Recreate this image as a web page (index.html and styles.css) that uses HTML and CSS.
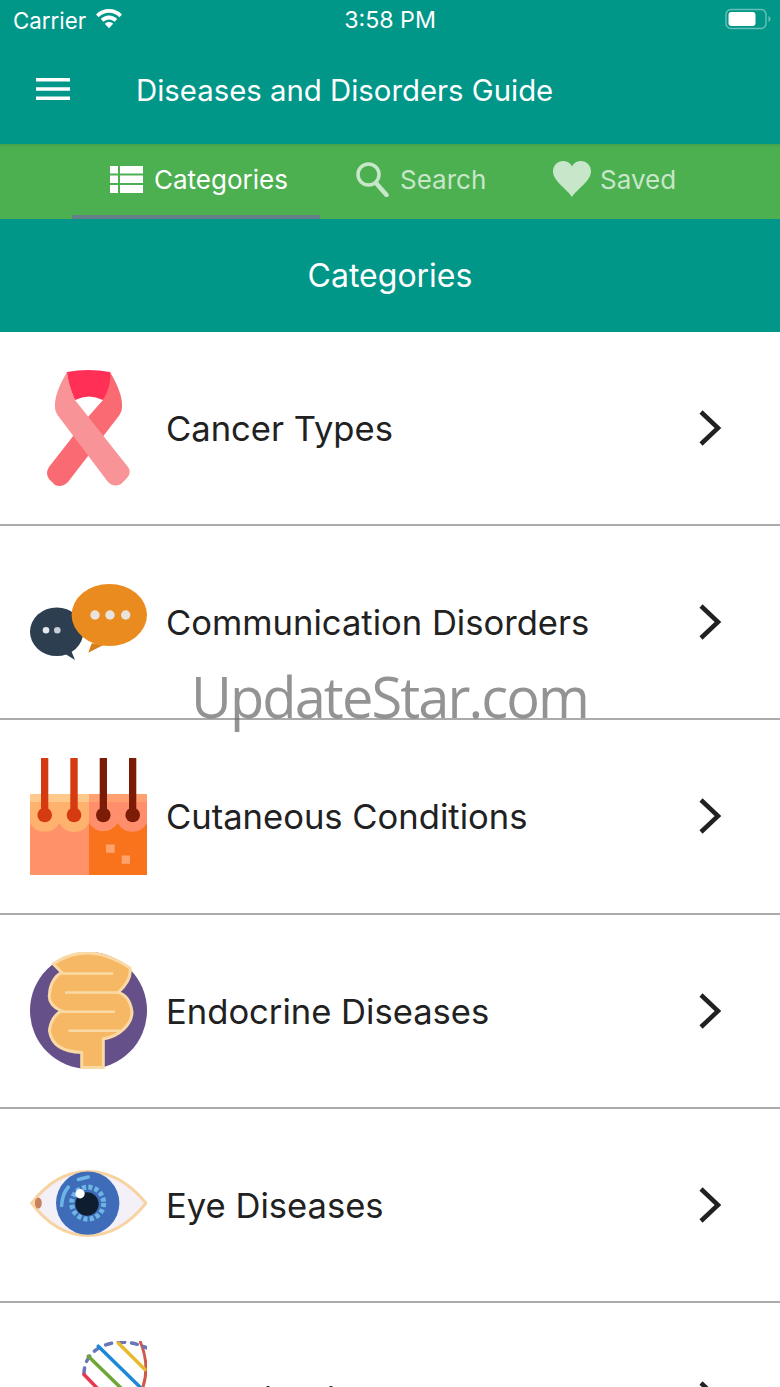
FILE: index.html
```html
<!DOCTYPE html>
<html lang="en">
<head>
<meta charset="utf-8">
<title>Diseases and Disorders Guide</title>
<link rel="stylesheet" href="styles.css">
</head>
<body>
<div class="screen">
  <div class="status">
    <div class="status-left">
      <span>Carrier</span>
      <svg class="wifi" viewBox="0 0 28 22"><path fill="#fff" d="M14 2C8.800 2 4.400 4 1 7.400l2.600 2.800C6.400 7.400 10 5.800 14 5.800s7.600 1.600 10.400 4.400L27 7.400C23.600 4 19.200 2 14 2zM14 8.600c-3.200 0-6 1.200-8.200 3.400l2.600 2.800c1.500-1.500 3.400-2.400 5.600-2.400s4.100 .9 5.600 2.400l2.600-2.800C20 9.800 17.200 8.600 14 8.600zM14 15c-1.700 0-3.100 .6-4.200 1.700L14 21.200l4.200-4.500C17.100 15.600 15.700 15 14 15z"/></svg>
    </div>
    <span class="status-time">3:58 PM</span>
    <svg class="battery" viewBox="0 0 46 22"><rect x="1" y="1.500" width="40" height="19" rx="5" fill="none" stroke="#fff" stroke-opacity=".4" stroke-width="1.500"/><rect x="3.500" y="4" width="27" height="14" rx="3" fill="#fff"/><path d="M43.500 8v6c1.200-.5 2-1.700 2-3s-.8-2.500-2-3z" fill="#fff" fill-opacity=".4"/></svg>
  </div>
  <header class="appbar">
    <svg class="menu" viewBox="0 0 36 24"><path d="M0 2.500h35M0 12h35M0 21.500h35" stroke="#fff" stroke-width="3.500" fill="none"/></svg>
    <h1 class="app-title">Diseases and Disorders Guide</h1>
  </header>
  <nav class="tabs">
    <div class="tab tab-active">
      <svg class="tab-icon-grid" viewBox="0 0 33 27"><path fill="#fff" d="M0 0h8v7.500H0zM10 0h23v7.500H10zM0 9.500h8V17H0zM10 9.500h23V17H10zM0 19h8v8H0zM10 19h23v8H10z"/></svg>
      <span>Categories</span>
    </div>
    <div class="tab tab-search">
      <svg class="tab-icon-search" viewBox="0 0 34 36"><circle cx="13.500" cy="13.500" r="10.500" fill="none" stroke="#C8E6C9" stroke-width="3.500"/><path d="M21 22l10.500 12" stroke="#C8E6C9" stroke-width="4.500" stroke-linecap="round"/></svg>
      <span>Search</span>
    </div>
    <div class="tab tab-saved">
      <svg class="tab-icon-heart" viewBox="0 0 38 36"><path fill="#C8E6C9" d="M19 36C15 29 0 20 0 10.500 0 4.500 4.500 0 10 0c4 0 7.500 2.200 9 5.500C20.500 2.200 24 0 28 0c5.500 0 10 4.500 10 10.500C38 20 23 29 19 36z"/></svg>
      <span>Saved</span>
    </div>
    <div class="tab-indicator"></div>
  </nav>
  <div class="section-head">Categories</div>
  <ul class="list">
    <li class="row">
      <svg class="row-icon" viewBox="0 0 117 117">
        <path fill="#F96A72" d="M80 2Q93 24 92 37 92 42 88 47L38 112Q32 118 25 115L19 109Q15 103 19 97L58 47 73 30z"/>
        <path fill="#F89498" d="M37 2Q24 24 25 37 25 42 29 47L78 112Q84 118 91 114L97 108Q102 102 98 97L45 30Q38 14 37 2z"/>
        <path fill="#FF2F55" d="M37 2Q58-2 80 2 82 14 73 30 59 23 45 30 38 14 37 2z"/>
      </svg>
      <span class="row-label">Cancer Types</span>
      <svg class="chevron" viewBox="0 0 26 38"><path d="M4 3l17 16L4 35" fill="none" stroke="#212121" stroke-width="4.500"/></svg>
    </li>
    <li class="row">
      <svg class="row-icon" viewBox="0 0 117 117">
        <ellipse cx="26.700" cy="67.700" rx="26.700" ry="24.300" fill="#2D3E50"/>
        <path fill="#2D3E50" d="M31.700 87.700L45 96 40 84z"/>
        <circle cx="16" cy="66.300" r="3.300" fill="#E4E8EC"/>
        <circle cx="27.300" cy="66.300" r="3.300" fill="#C6CDD4"/>
        <path fill="#D87F1B" d="M61.700 79.300L58.300 88.700 73.300 81z"/>
        <ellipse cx="79.300" cy="51" rx="37.700" ry="31" fill="#E98B1E"/>
        <circle cx="65" cy="51" r="4.700" fill="#E8E3DC"/>
        <circle cx="80" cy="51" r="4.700" fill="#E8E3DC"/>
        <circle cx="95.700" cy="51" r="4.700" fill="#E8E3DC"/>
      </svg>
      <span class="row-label">Communication Disorders</span>
      <svg class="chevron" viewBox="0 0 26 38"><path d="M4 3l17 16L4 35" fill="none" stroke="#212121" stroke-width="4.500"/></svg>
    </li>
    <li class="row">
      <svg class="row-icon" viewBox="0 0 117 117">
        <path fill="#FF9268" d="M0 36h59v81H0z"/>
        <path fill="#F8731C" d="M59 36h58v81H59z"/>
        <path fill="#FFB26D" d="M0 36H59V65A16.700 16.700 0 0 1 29.400 65 16.700 16.700 0 0 1 0 65z"/>
        <path fill="#FF8F6C" d="M59 36H117V65A16.700 16.700 0 0 1 87.700 65 16.700 16.700 0 0 1 59 65z"/>
        <path fill="#FFC98C" d="M0 36h59v8H0z"/>
        <path fill="#FFA070" d="M59 36h58v8H59z"/>
        <path fill="#FFA36E" d="M76 86.400h8.700v8.300H76zM91.700 97.400h8.300v8.300h-8.300z"/>
        <path fill="#D63A10" d="M11 0h7.300v52H11zM40.300 0h7.400v52h-7.400z"/>
        <circle cx="14.700" cy="57" r="7.300" fill="#D63A10"/>
        <circle cx="44" cy="57" r="7.300" fill="#D63A10"/>
        <path fill="#7D1C06" d="M69.700 0H77v52h-7.300zM99 0h7.300v52H99z"/>
        <circle cx="73.300" cy="57" r="7.300" fill="#7D1C06"/>
        <circle cx="102.700" cy="57" r="7.300" fill="#7D1C06"/>
      </svg>
      <span class="row-label">Cutaneous Conditions</span>
      <svg class="chevron" viewBox="0 0 26 38"><path d="M4 3l17 16L4 35" fill="none" stroke="#212121" stroke-width="4.500"/></svg>
    </li>
    <li class="row">
      <svg class="row-icon" viewBox="0 0 117 117">
        <circle cx="58.500" cy="58.500" r="58.500" fill="#66508A"/>
        <path fill="#F7B866" stroke="#F9D9A4" stroke-width="3" d="M23.300 12Q58-12 100 16 102 28 88.300 40.400 100 44 102 60C102 72 90 84 73.300 87V115.400H51.700V100.400C38 100 22 96 19.500 79 20 70 25 62 31.700 58.800 24 56 18 50 19.500 42 20 32 25 24 31.700 20.400z"/>
        <path d="M31.700 21.400H83.300M35 40.400H88.300M31.700 59.800H85M38.300 78.800H90" stroke="#F9D9A4" stroke-width="2.500" fill="none"/>
      </svg>
      <span class="row-label">Endocrine Diseases</span>
      <svg class="chevron" viewBox="0 0 26 38"><path d="M4 3l17 16L4 35" fill="none" stroke="#212121" stroke-width="4.500"/></svg>
    </li>
    <li class="row">
      <svg class="row-icon" viewBox="0 0 117 117">
        <path fill="#F3F0F8" stroke="#F8D3A2" stroke-width="3" d="M1.700 57.100Q26 25.500 58 25.500T116 57.100Q90 89.500 58 89.500T1.700 57.100z"/>
        <ellipse cx="8.300" cy="57.100" rx="3.500" ry="5.500" fill="#C9815B"/>
        <circle cx="57.700" cy="57.100" r="31.700" fill="#3F6CB8"/>
        <circle cx="57.700" cy="57.100" r="16" fill="none" stroke="#6DB5E4" stroke-width="5" stroke-dasharray="4 2.300"/>
        <circle cx="57" cy="58" r="11.700" fill="#0F1D30"/>
        <circle cx="50" cy="47.800" r="4.700" fill="#fff"/>
        <path d="M31.700 59.500C32 52 34 46 38.300 41M48.300 33.500L58.300 31" fill="none" stroke="#6DB5E4" stroke-width="3.500" stroke-linecap="round"/>
      </svg>
      <span class="row-label">Eye Diseases</span>
      <svg class="chevron" viewBox="0 0 26 38"><path d="M4 3l17 16L4 35" fill="none" stroke="#212121" stroke-width="4.500"/></svg>
    </li>
    <li class="row">
      <svg class="row-icon" viewBox="0 0 117 117">
        <path d="M110 0C116 14 118 30 113 46" fill="none" stroke="#CE5A4B" stroke-width="3"/>
        <path d="M54 33C54 18 64 3 90 1 100 1 108 3 117 7" fill="none" stroke="#6A76B8" stroke-width="3.500" stroke-dasharray="6 7" stroke-linecap="round"/>
        <path d="M88.300 2L115 28.500" stroke="#E7B92C" stroke-width="3.500" stroke-linecap="round"/>
        <path d="M68.300 5.200L112 48" stroke="#1E88D8" stroke-width="3.500" stroke-linecap="round"/>
        <path d="M58.300 15.200L92 48" stroke="#6DA632" stroke-width="3.500" stroke-linecap="round"/>
        <path d="M54 33.500L68 48" stroke="#E8364F" stroke-width="3.500" stroke-linecap="round"/>
      </svg>
      <span class="row-label">Genetic Disorders</span>
      <svg class="chevron" viewBox="0 0 26 38"><path d="M4 3l17 16L4 35" fill="none" stroke="#212121" stroke-width="4.500"/></svg>
    </li>
  </ul>
  <div class="watermark">UpdateStar.com</div>
</div>
</body>
</html>
```
FILE: styles.css
```css
* { box-sizing: border-box; }
html, body { margin: 0; padding: 0; }
body { font-family: Inter, Roboto, sans-serif; background: #fff; }
.screen { position: relative; width: 780px; height: 1387px; overflow: hidden; }
.status {
  height: 40px; background: #009688; color: #fff;
  display: flex; align-items: center; justify-content: space-between;
  padding: 0 9px 0 13px; position: relative; font-size: 22.300px;
}
.status-left { display: flex; align-items: center; gap: 9px; }
.wifi { width: 28px; height: 22px; margin-top: -4px; }
.status-time { position: absolute; left: 0; right: 0; text-align: center; font-size: 23.200px; }
.battery { width: 46px; height: 22px; margin-top: -2px; }
.appbar {
  height: 104px; background: #009688; color: #fff;
  display: flex; align-items: center; padding: 0 0 6px 36px;
}
.menu { width: 35px; height: 24px; flex: none; }
.app-title { margin: 3px 0 0 65px; font-size: 29.350px; font-weight: 400; }
.tabs {
  position: relative; height: 75px; background: #4CAF50; color: #C8E6C9;
  display: flex; align-items: center; padding-left: 72px;
  font-size: 26px;
  box-shadow: inset 0 3px 3px -2px rgba(0,0,0,.12);
}
.tab { display: flex; align-items: center; height: 100%; padding-bottom: 5px; }
.tab-active { width: 248px; color: #fff; padding-left: 38px; gap: 11px; }
.tab-search { width: 233px; padding-left: 35px; gap: 11px; }
.tab-saved { padding-left: 0; gap: 9px; }
.tab-icon-grid { width: 33px; height: 27px; }
.tab-icon-search { width: 34px; height: 36px; }
.tab-icon-heart { width: 38px; height: 36px; }
.tab-indicator { position: absolute; left: 72px; bottom: 0; width: 248px; height: 4px; background: #65808A; }
.section-head {
  height: 113px; background: #009688; color: #fff;
  display: flex; align-items: center; justify-content: center;
  font-size: 32px;
}
.list { list-style: none; margin: 0; padding: 0; }
.row {
  height: 194.200px; display: flex; align-items: center;
  padding: 0 0 0 30px; border-bottom: 2px solid #ABABAB;
}
.row-icon { width: 117px; height: 117px; flex: none; }
.row-label { margin-left: 19px; flex: 1; font-size: 34.600px; color: #212121; }
.chevron { width: 26px; height: 38px; flex: none; margin-right: 57px; }
.watermark {
  position: absolute; left: 191px; top: 656px;
  font-family: "Open Sans", "Noto Sans", sans-serif; font-size: 56px; line-height: 80px;
  letter-spacing: -1.900px; color: rgba(105,105,105,.72); white-space: nowrap;
}
```
